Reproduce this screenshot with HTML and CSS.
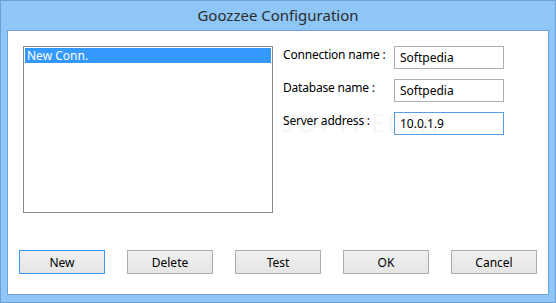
FILE: index.html
```html
<!DOCTYPE html>
<html lang="en">
    <head>
        <meta charset="UTF-8" />
        <title>Goozzee Configuration</title>
        <link rel="stylesheet" href="styles.css">
    </head>
    <body>
        <div class="window">
            <div class="titlebar">Goozzee Configuration</div>
            <div class="client">
                <div class="top">
                    <ul class="connlist">
                        <li class="selected">New Conn.</li>
                    </ul>
                    <form class="fields">
                        <label for="conn">Connection name :</label>
                        <input type="text" id="conn" value="Softpedia" />
                        <label for="db">Database name :</label>
                        <input type="text" id="db" value="Softpedia" />
                        <label for="server">Server address :</label>
                        <input type="text" id="server" class="focused" value="10.0.1.9" />
                    </form>
                </div>
                <div class="buttons">
                    <button type="button" class="default">New</button>
                    <button type="button">Delete</button>
                    <button type="button">Test</button>
                    <button type="button">OK</button>
                    <button type="button">Cancel</button>
                </div>
                <div class="watermark">SOFTPEDIA</div>
            </div>
        </div>
    </body>
</html>
```

FILE: styles.css
```css
* {
    margin: 0;
    padding: 0;
    box-sizing: border-box;
}
body {
    background-color: #ffffff;
    font-family: "Noto Sans", "Open Sans", sans-serif;
    font-size: 12px;
    color: #000;
}
.window {
    width: 556px;
    height: 303px;
    border: 1px solid #6d9fd4;
    background-color: #8ec7f7;
    padding: 0 6px 7px 6px;
    display: flex;
    flex-direction: column;
}
.titlebar {
    height: 29px;
    line-height: 29px;
    text-align: center;
    font-size: 15px;
    color: #2b2b2b;
}
.client {
    position: relative;
    flex: 1;
    background-color: #fff;
    border: 1px solid #6fa1d4;
    display: flex;
    flex-direction: column;
}
.top {
    display: flex;
    padding: 15px 0 0 15px;
}
.connlist {
    list-style: none;
    width: 250px;
    height: 167px;
    border: 1px solid #828790;
    padding: 1px;
}
.connlist li {
    height: 15px;
    line-height: 15px;
    padding-left: 2px;
}
.connlist .selected {
    background-color: #3399ff;
    color: #fff;
}
.fields {
    display: grid;
    grid-template-columns: 111px 110px;
    grid-auto-rows: 23px;
    row-gap: 10px;
    margin-left: 10px;
}
.fields label {
    padding-top: 1px;
    line-height: 15px;
    letter-spacing: -0.2px;
}
.fields input {
    font-family: inherit;
    font-size: 12px;
    border: 1px solid #abadb3;
    padding: 0 5px;
    outline: none;
    color: #000;
}
.fields .focused {
    border-color: #569de5;
}
.buttons {
    display: flex;
    gap: 22px;
    margin-top: auto;
    padding: 0 0 20px 11px;
}
.buttons button {
    width: 86px;
    height: 24px;
    font-family: inherit;
    font-size: 12px;
    color: #000;
    border: 1px solid #adadad;
    background: linear-gradient(#f0f0f0, #e5e5e5);
}
.buttons .default {
    border-color: #3399ff;
}
.watermark {
    position: absolute;
    left: 272px;
    top: 74px;
    font-size: 26px;
    font-weight: bold;
    letter-spacing: 2px;
    color: rgba(0, 0, 0, 0.03);
    pointer-events: none;
}
```
